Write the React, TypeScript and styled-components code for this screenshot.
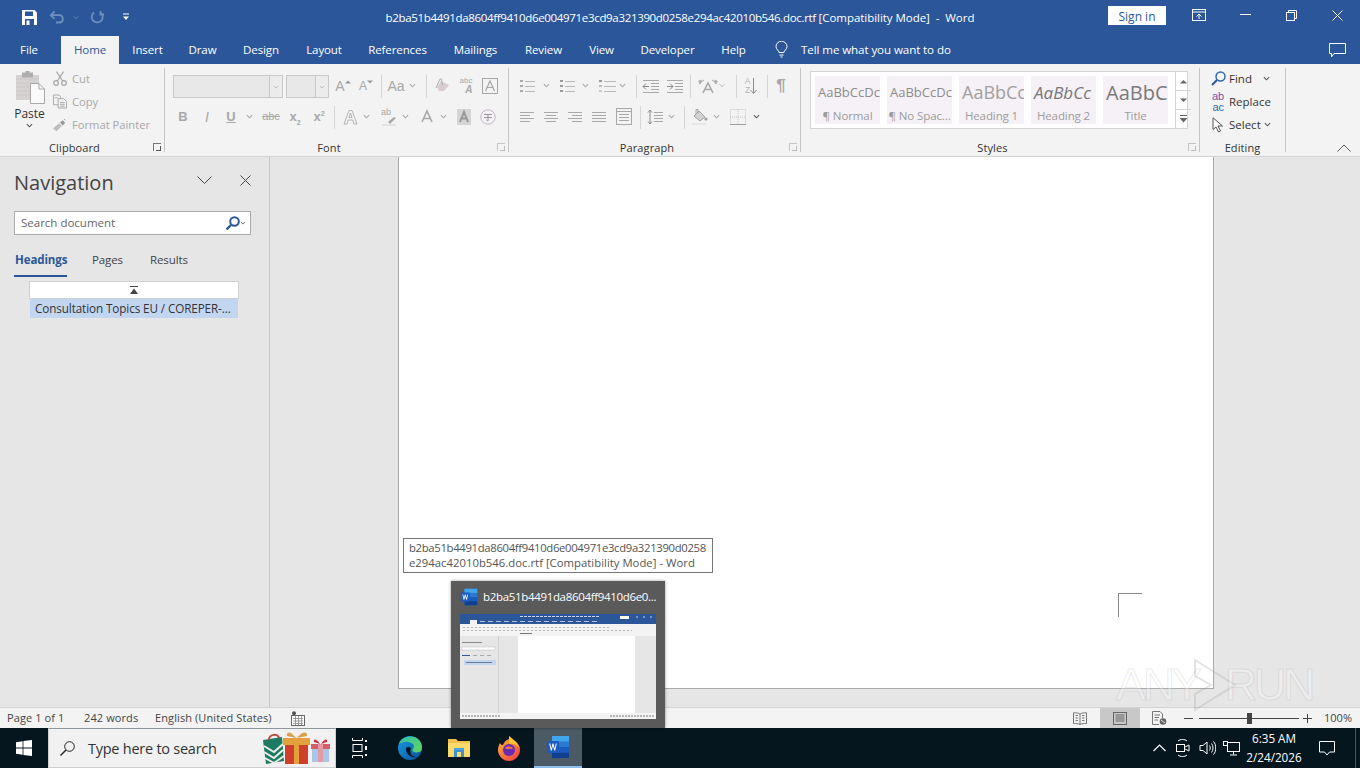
import React from 'react'
import styled, { createGlobalStyle } from 'styled-components'

const UI = '"Open Sans", "Noto Sans", "Liberation Sans", sans-serif'
const DIM = '#a8a8a8'

const Global = createGlobalStyle`
	html, body {
		margin: 0;
		padding: 0;
		overflow: hidden;
		background: #e6e6e6;
		font-family: ${UI};
	}
`

const Screen = styled.div`
	position: relative;
	width: 1360px;
	height: 768px;
	display: flex;
	flex-direction: column;
	overflow: hidden;
`

/* title bar */
const TitleBar = styled.div`
	height: 36px;
	flex: none;
	background: #2b579a;
	display: grid;
	grid-template-columns: 1fr auto 1fr;
	color: #fff;
`
const Qat = styled.div`
	display: flex;
	align-items: center;
	height: 34px;
	padding-left: 17px;
`
const QatBtn = styled.span<{ $w: number }>`
	width: ${p => p.$w}px;
	flex: none;
	display: flex;
	align-items: center;
	justify-content: center;
`
const DocTitle = styled.div`
	font-size: 11.5px;
	line-height: 35px;
	white-space: pre;
	letter-spacing: -0.33px;
`
const TitleTail = styled.span`
	letter-spacing: -0.04px;
`
const WinArea = styled.div`
	display: flex;
	justify-content: flex-end;
`
const SignIn = styled.span`
	width: 58px;
	height: 19px;
	margin: 6px 10px 0 0;
	background: #fff;
	color: #2b579a;
	font-size: 12px;
	line-height: 21px;
	text-align: center;
`
const WinBtn = styled.span`
	width: 46px;
	height: 30px;
	display: flex;
	align-items: center;
	justify-content: center;
`

/* tabs */
const TabBar = styled.div`
	height: 28px;
	flex: none;
	background: #2b579a;
	display: flex;
	align-items: stretch;
`
const Tab = styled.span<{ $w: number; $active?: boolean; $ml?: number }>`
	width: ${p => p.$w}px;
	margin-left: ${p => p.$ml || 0}px;
	flex: none;
	text-align: center;
	font-size: 11.5px;
	line-height: 28px;
	letter-spacing: -0.1px;
	color: ${p => (p.$active ? '#2b579a' : '#fff')};
	background: ${p => (p.$active ? '#f3f3f3' : 'transparent')};
`
const TellMe = styled.div`
	display: flex;
	align-items: center;
	margin-left: 16px;
	padding-bottom: 2px;
	color: #fff;
	font-size: 11.6px;
	letter-spacing: -0.1px;
	gap: 13px;
`
const CommentBtn = styled.span`
	margin-left: auto;
	margin-right: 14px;
	display: flex;
	align-items: center;
`

/* ribbon */
const Ribbon = styled.div`
	height: 93px;
	flex: none;
	background: #f3f3f3;
	border-bottom: 1px solid #d2d2d2;
	box-sizing: border-box;
	display: flex;
	position: relative;
`
const Group = styled.div<{ $w: number }>`
	width: ${p => p.$w}px;
	flex: none;
	box-sizing: border-box;
	display: flex;
	flex-direction: column;
	height: 84px;
	margin-top: 4px;
	border-right: 1px solid #c6c6c6;
`
const GroupBody = styled.div`
	flex: 1;
	min-height: 0;
`
const GroupFoot = styled.div<{ $plain?: boolean }>`
	height: 17px;
	margin-bottom: -4px;
	flex: none;
	display: flex;
	align-items: center;
	justify-content: center;
	padding-right: ${p => (p.$plain ? 0 : 15)}px;
	position: relative;
	font-size: 11px;
	color: #333;
	letter-spacing: 0.1px;
`
const Launcher = styled.span<{ $dark?: boolean }>`
	position: absolute;
	right: 3px;
	top: 4px;
	width: 7px;
	height: 7px;
	border: 1px solid ${p => (p.$dark ? '#777' : '#c4c4c4')};
	border-right-width: 0;
	border-bottom-width: 0;
	&::after {
		content: '';
		position: absolute;
		right: 0;
		bottom: 0;
		width: 4px;
		height: 4px;
		border-right: 1px solid ${p => (p.$dark ? '#555' : '#bbb')};
		border-bottom: 1px solid ${p => (p.$dark ? '#555' : '#bbb')};
	}
`
const ClipBody = styled(GroupBody)`
	display: flex;
	padding-left: 13px;
`
const PasteCol = styled.div`
	width: 33px;
	display: flex;
	flex-direction: column;
	align-items: center;
	padding-top: 3px;
`
const PasteLabel = styled.span`
	font-size: 12px;
	color: #333;
	line-height: 17px;
`
const ClipList = styled.div`
	margin: -1px 0 0 7px;
`
const ClipRow = styled.div`
	display: flex;
	align-items: center;
	height: 23px;
	gap: 5px;
	font-size: 11.2px;
	color: ${DIM};
	white-space: nowrap;
`
const ClipIcon = styled.span`
	width: 14px;
	display: flex;
	justify-content: center;
`
const Rows = styled.div`
	display: flex;
	flex-direction: column;
	padding-top: 7px;
`
const Row = styled.div<{ $ml?: number; $top?: number }>`
	display: flex;
	align-items: center;
	height: 23px;
	margin-left: ${p => p.$ml || 0}px;
	margin-top: ${p => p.$top || 0}px;
`
const Tool = styled.span<{ $w: number; $ml?: number }>`
	width: ${p => p.$w}px;
	margin-left: ${p => p.$ml || 0}px;
	margin-bottom: 2px;
	flex: none;
	display: flex;
	align-items: center;
	justify-content: center;
	color: ${DIM};
`
const Glyph = styled.span<{ $size?: number; $bold?: boolean; $italic?: boolean; $under?: boolean; $strike?: boolean; $c?: string }>`
	font-family: "Liberation Sans", sans-serif;
	font-size: ${p => p.$size || 13}px;
	font-weight: ${p => (p.$bold ? 700 : 400)};
	font-style: ${p => (p.$italic ? 'italic' : 'normal')};
	text-decoration: ${p => (p.$under ? 'underline' : p.$strike ? 'line-through' : 'none')};
	line-height: 1;
	white-space: nowrap;
	color: ${p => p.$c || DIM};
	sub, sup { font-size: 7px; line-height: 0; }
`
const Stack = styled.span<{ $align?: string }>`
	display: flex;
	flex-direction: column;
	align-items: ${p => p.$align || 'flex-end'};
	line-height: 1;
`
const GrowMark = styled.svg`
	flex: none;
	margin: -7px 0 0 0;
`
const Sep = styled.span<{ $ml?: number }>`
	width: 1px;
	height: 23px;
	flex: none;
	background: #d6d6d6;
	margin-left: ${p => p.$ml || 0}px;
`
const Combo = styled.div<{ $w: number; $ml?: number }>`
	width: ${p => p.$w}px;
	height: 23px;
	box-sizing: border-box;
	margin-left: ${p => p.$ml || 0}px;
	flex: none;
	background: #e8e8e8;
	border: 1px solid #c8c8c8;
	display: flex;
	justify-content: flex-end;
`
const ComboArrow = styled.span`
	width: 12px;
	border-left: 1px solid #c8c8c8;
	display: flex;
	align-items: center;
	justify-content: center;
	background: #ececec;
`

/* styles gallery */
const StylesBody = styled(GroupBody)`
	padding: 3px 0 0 9px;
`
const Gallery = styled.div`
	width: 378px;
	height: 58px;
	box-sizing: border-box;
	background: #fff;
	border: 1px solid #d4d4d4;
	display: flex;
	padding: 4px 0 4px 4px;
	gap: 7px;
`
const StyleTile = styled.div`
	width: 65px;
	height: 48px;
	flex: none;
	background: #f6f1f6;
	overflow: hidden;
	display: flex;
	flex-direction: column;
	align-items: center;
`
const Preview = styled.div<{ $size: number; $italic?: boolean; $tone?: string }>`
	height: 31px;
	width: 100%;
	line-height: 33px;
	padding-left: 3px;
	box-sizing: border-box;
	overflow: hidden;
	white-space: nowrap;
	font-size: ${p => p.$size}px;
	font-style: ${p => (p.$italic ? 'italic' : 'normal')};
	color: ${p => p.$tone || '#8c8c8c'};
`
const Caption = styled.div`
	font-size: 11.5px;
	line-height: 17px;
	color: #9c9c9c;
	white-space: nowrap;
	letter-spacing: -0.1px;
`
const Spinner = styled.div`
	margin-left: auto;
	width: 15px;
	margin-top: -4px;
	margin-bottom: -4px;
	flex: none;
	border-left: 1px solid #d4d4d4;
	display: flex;
	flex-direction: column;
`
const SpinCell = styled.span<{ $last?: boolean }>`
	flex: 1;
	display: flex;
	align-items: center;
	justify-content: center;
	border-bottom: ${p => (p.$last ? 'none' : '1px solid #d4d4d4')};
`

/* editing */
const EditBody = styled(GroupBody)`
	padding-left: 9px;
	margin-top: -1px;
`
const EditRow = styled.div`
	display: flex;
	align-items: center;
	height: 23px;
	font-size: 11.5px;
	color: #333;
	white-space: nowrap;
`
const EditIcon = styled.span`
	width: 20px;
	flex: none;
	display: flex;
	justify-content: center;
	padding-right: 2px;
	box-sizing: border-box;
`
const EditChev = styled.span<{ $ml: number }>`
	margin-left: ${p => p.$ml}px;
	display: flex;
`
const Collapse = styled.span`
	position: absolute;
	right: 9px;
	bottom: 4px;
	display: flex;
`

/* main */
const Main = styled.div`
	height: 550px;
	flex: none;
	display: flex;
	background: #e6e6e6;
`
const NavPane = styled.aside`
	width: 270px;
	flex: none;
	box-sizing: border-box;
	border-right: 1px solid #c6c6c6;
	padding: 0 0 0 14px;
`
const NavHead = styled.div`
	height: 50px;
	display: flex;
	align-items: center;
	font-size: 20px;
	color: #444;
	padding-right: 3px;
`
const NavTitle = styled.span`
	flex: 1;
`
const NavBtn = styled.span`
	width: 41px;
	display: flex;
	justify-content: center;
	margin-top: -4px;
`
const SearchBox = styled.div`
	width: 237px;
	height: 24px;
	margin-top: 4px;
	box-sizing: border-box;
	background: #fff;
	border: 1px solid #ababab;
	display: flex;
	align-items: center;
	padding: 0 4px 0 6px;
	font-size: 11.5px;
	color: #666;
`
const SearchText = styled.span`
	flex: 1;
	padding-bottom: 2px;
`
const NavTabs = styled.div`
	display: flex;
	height: 42px;
`
const NavTab = styled.span<{ $w: number; $active?: boolean }>`
	width: ${p => p.$w}px;
	flex: none;
	box-sizing: border-box;
	height: 42px;
	line-height: 50px;
	padding-left: ${p => (p.$active ? 1 : 0)}px;
	font-size: 11.5px;
	letter-spacing: -0.1px;
	font-weight: ${p => (p.$active ? 700 : 400)};
	color: ${p => (p.$active ? '#2b579a' : '#444')};
	border-bottom: ${p => (p.$active ? '2px solid #2b579a' : 'none')};
	margin-right: ${p => (p.$active ? 25 : 0)}px;
`
const HeadingTop = styled.div`
	width: 210px;
	height: 18px;
	margin: 4px 0 0 15px;
	box-sizing: border-box;
	background: #fff;
	border: 1px solid #d0d0d0;
	display: flex;
	align-items: center;
	justify-content: center;
`
const HeadingItem = styled.div`
	width: 208px;
	height: 19px;
	margin-left: 16px;
	background: #c3d6f1;
	font-size: 11.7px;
	line-height: 19px;
	letter-spacing: -0.1px;
	color: #333;
	padding-left: 5px;
	box-sizing: border-box;
	white-space: nowrap;
	overflow: hidden;
`
const DocArea = styled.div`
	flex: 1;
	padding-left: 128px;
`
const Page = styled.div`
	width: 816px;
	height: 532px;
	box-sizing: border-box;
	background: #fff;
	border: 1px solid #a9a9a9;
	border-top: none;
	display: flex;
	justify-content: flex-end;
	align-items: flex-end;
	padding: 0 71px 71px 0;
`
const CropMark = styled.span`
	width: 23px;
	height: 23px;
	border-top: 1px solid #8a8a8a;
	border-left: 1px solid #8a8a8a;
`

/* status bar */
const StatusBar = styled.div`
	height: 21px;
	flex: none;
	box-sizing: border-box;
	background: #f3f3f3;
	border-top: 1px solid #d2d2d2;
	display: flex;
	align-items: center;
	padding-left: 7px;
	font-size: 11px;
	color: #444;
`
const StatusText = styled.span<{ $w: number }>`
	width: ${p => p.$w}px;
	flex: none;
	padding-bottom: 2px;
	white-space: nowrap;
	letter-spacing: 0.1px;
`
const ViewBtn = styled.span<{ $w: number; $on?: boolean; $auto?: boolean }>`
	width: ${p => p.$w}px;
	height: 20px;
	margin-left: ${p => (p.$auto ? 'auto' : '0')};
	flex: none;
	display: flex;
	align-items: center;
	justify-content: center;
	background: ${p => (p.$on ? '#c8c8c8' : 'transparent')};
`
const Slider = styled.span`
	width: 100px;
	height: 1px;
	flex: none;
	background: #444;
	display: flex;
	justify-content: center;
	align-items: center;
`
const Thumb = styled.span`
	width: 5px;
	height: 11px;
	background: #444;
	flex: none;
`
const Zoom = styled.span`
	width: 37px;
	padding-right: 8px;
	padding-bottom: 2px;
	text-align: right;
	flex: none;
`

/* taskbar */
const Taskbar = styled.div`
	height: 40px;
	flex: none;
	background: #05161f;
	display: flex;
	align-items: stretch;
	color: #fff;
`
const TaskItem = styled.span<{ $w: number; $active?: boolean }>`
	width: ${p => p.$w}px;
	flex: none;
	box-sizing: border-box;
	display: flex;
	align-items: center;
	justify-content: center;
	background: ${p => (p.$active ? '#4b5a65' : 'transparent')};
	border-bottom: ${p => (p.$active ? '2px solid #8cc0ea' : 'none')};
`
const SearchBar = styled.div`
	width: 288px;
	flex: none;
	box-sizing: border-box;
	background: #f1f1f1;
	border: 1px solid #cfcfcf;
	border-top-color: #8f979c;
	display: flex;
	align-items: center;
	padding: 0 3px 0 11px;
	color: #333;
	font-size: 14.5px;
	letter-spacing: -0.25px;
`
const SearchPrompt = styled.span`
	margin-left: 13px;
	flex: 1;
	white-space: nowrap;
`
const Clock = styled.span`
	width: 62px;
	flex: none;
	font-size: 11.7px;
	line-height: 19px;
	display: flex;
	flex-direction: column;
	justify-content: center;
	white-space: nowrap;
	align-items: center;
`
const Tray = styled.div`
	margin-left: auto;
	display: flex;
	align-items: stretch;
`
const DesktopEdge = styled.span`
	width: 4px;
	margin-left: 6px;
	border-left: 1px solid #4a5560;
`

/* overlays */
const Tooltip = styled.div`
	position: absolute;
	left: 403px;
	top: 538px;
	width: 310px;
	height: 35px;
	box-sizing: border-box;
	background: #fff;
	border: 1px solid #767676;
	padding: 1px 0 0 5px;
	font-size: 11.3px;
	line-height: 15px;
	color: #555;
	white-space: nowrap;
`
const TipLine = styled.div<{ $ls: number }>`
	letter-spacing: ${p => p.$ls}px;
`
const Peek = styled.div`
	position: absolute;
	left: 451px;
	top: 581px;
	width: 214px;
	height: 147px;
	background: #5a5a5a;
	box-shadow: 0 0 3px rgba(0, 0, 0, 0.4);
	display: flex;
	flex-direction: column;
	padding: 0 9px;
	box-sizing: border-box;
	color: #fff;
`
const PeekHead = styled.div`
	height: 33px;
	flex: none;
	display: flex;
	align-items: center;
	gap: 5px;
	padding-bottom: 2px;
	box-sizing: border-box;
	font-size: 11.5px;
	white-space: nowrap;
	letter-spacing: -0.33px;
	svg { flex: none; }
`
const Watermark = styled.div`
	position: absolute;
	left: 1116px;
	top: 656px;
	width: 200px;
	height: 58px;
	display: flex;
	align-items: center;
	pointer-events: none;
	font-family: "Liberation Sans", sans-serif;
	font-size: 45px;
	color: rgba(255, 255, 255, 0.25);
	-webkit-text-stroke: 1px rgba(150, 150, 150, 0.2);
	letter-spacing: -3.3px;
`
const WatermarkPlay = styled.svg`
	margin: 0 -16px 0 -14px;
	flex: none;
`

/* icons */
const Chev = ({ c = DIM, s = 7 }: { c?: string; s?: number }) => (
	<svg width={s} height={s} viewBox="0 0 8 8" fill="none" stroke={c} strokeWidth="1.2"><path d="M1 2.5 4 5.5 7 2.5" /></svg>
)
const AlignIcon = ({ kind }: { kind: 'l' | 'c' | 'r' | 'j' }) => {
	const p = (i: number) => {
		const short = i % 2 === 1 ? 4 : 0
		if (kind === 'l') return `M1 ${3.5 + i * 3}H${15 - short}`
		if (kind === 'r') return `M${1 + short} ${3.5 + i * 3}H15`
		if (kind === 'c') return `M${1 + short / 2} ${3.5 + i * 3}H${15 - short / 2}`
		return `M1 ${3.5 + i * 3}H15`
	}
	return (
		<svg width="16" height="16" viewBox="0 0 16 16" stroke={DIM} fill="none">
			{[0, 1, 2, 3].map(i => <path key={i} d={p(i)} />)}
		</svg>
	)
}
const ListIcon = ({ marks, w = 16 }: { marks: string[]; w?: number }) => (
	<svg width={w} height="16" viewBox={`0 0 ${w} 16`} fill="none">
		{marks.map((m, i) => (
			<g key={i}>
				<rect x="1" y={2 + i * 5} width="3" height="2" fill={m} />
				<path d={`M6 ${3.5 + i * 5}H${w}`} stroke="#b8b8b8" />
			</g>
		))}
	</svg>
)
const Indent = ({ out }: { out?: boolean }) => (
	<svg width="18" height="16" viewBox="0 0 18 16" fill="none" stroke={DIM}>
		<path d="M1 2.5H17M9 5.5H17M9 8.5H17M9 11.5H17M1 14.5H17" />
		<path d={out ? 'M7 8.5H1M4 5.5 1 8.5 4 11.5' : 'M1 8.5H7M4 5.5 7 8.5 4 11.5'} stroke="#8a8a8a" />
	</svg>
)

const SaveIcon = () => (
	<svg width="15" height="15" viewBox="0 0 15 15"><path d="M0 0H12.5L15 2.5V15H0Z" fill="#fff" /><rect x="3" y="1.5" width="8" height="4.5" fill="#2b579a" /><rect x="3" y="9" width="9" height="6" fill="#2b579a" /><rect x="4.5" y="10.5" width="3" height="4.5" fill="#fff" /></svg>
)
const UndoIcon = () => (
	<svg width="16" height="14" viewBox="0 0 16 14" fill="none" stroke="#6f8fbf" strokeWidth="1.8"><path d="M5.5 1.5 1.8 5.2 5.5 8.9M2 5.2H10.5C15 5.2 15 12.5 10 12.5H7" /></svg>
)
const RedoIcon = () => (
	<svg width="14" height="14" viewBox="0 0 14 14" fill="none" stroke="#6f8fbf" strokeWidth="1.8"><path d="M4 2.5A5.5 5.5 0 1 0 10.5 2.5M10.5 1V4.5H14" /></svg>
)
const CustomizeIcon = () => (
	<svg width="8" height="8" viewBox="0 0 8 8" fill="#fff"><rect x="1" y="0.5" width="6" height="1" /><path d="M1 3.5H7L4 7Z" /></svg>
)
const RibbonOptIcon = () => (
	<svg width="14" height="12" viewBox="0 0 14 12" fill="none" stroke="#fff"><rect x="0.5" y="0.5" width="13" height="11" /><path d="M0.5 3H13.5M7 10V5M4.5 7.5 7 5 9.5 7.5" /></svg>
)
const MinIcon = () => <svg width="11" height="2" viewBox="0 0 11 2"><path d="M0 .5H11" stroke="#fff" /></svg>
const RestoreIcon = () => (
	<svg width="11" height="11" viewBox="0 0 11 11" fill="none" stroke="#fff"><rect x="0.5" y="2.5" width="8" height="8" /><path d="M2.5 2.5V.5H10.5V8.5H8.5" /></svg>
)
const CloseIcon = ({ c = '#fff', s = 11 }: { c?: string; s?: number }) => (
	<svg width={s} height={s} viewBox="0 0 11 11" stroke={c}><path d="M.5 .5 10.5 10.5M10.5 .5 .5 10.5" /></svg>
)
const BulbIcon = () => (
	<svg width="13" height="17" viewBox="0 0 13 17" fill="none" stroke="#fff"><path d="M4 11.5C4 9.5 1 8.5 1 5.7A5.5 5.5 0 0 1 12 5.7C12 8.5 9 9.5 9 11.5ZM4.5 14H8.5M5.5 16H7.5" /></svg>
)
const CommentIcon = () => (
	<svg width="17" height="15" viewBox="0 0 17 15" fill="none" stroke="#fff"><path d="M.5 .5H16.5V10.5H5L2.5 14V10.5H.5Z" /></svg>
)
const PasteIcon = () => (
	<svg width="30" height="34" viewBox="0 0 30 34">
		<rect x="1" y="4" width="23" height="25" fill="#d6d2d2" />
		<path d="M1 8H24M1 12H24M1 16H24M1 20H24M1 24H24" stroke="#cdc8c8" />
		<rect x="7" y="1.5" width="11" height="5" fill="#aeaeae" />
		<rect x="10.5" y="0" width="4" height="3" fill="#aeaeae" />
		<path d="M15.5 12.5H24L29.5 18V32.5H15.5Z" fill="#fafafa" stroke="#a8a8a8" />
		<path d="M24 12.5V18H29.5" fill="none" stroke="#a8a8a8" />
	</svg>
)
const CutIcon = () => (
	<svg width="14" height="15" viewBox="0 0 14 15" fill="none" stroke="#a6a6a6" strokeWidth="1.2"><circle cx="3" cy="12" r="2.3" /><circle cx="11" cy="12" r="2.3" /><path d="M4.3 10 10.5.7M9.7 10 3.5.7" /></svg>
)
const CopyIcon = () => (
	<svg width="15" height="15" viewBox="0 0 15 15" fill="#f3f3f3" stroke="#a6a6a6"><path d="M.5 .5H6.5L8 2V11H.5Z" /><path d="M5.5 4.5H11.5L14.5 7.5V14.5H5.5Z" /><path d="M7.5 8.5H12.5M7.5 10.5H12.5M7.5 12.5H12.5M2 3.5H5" /></svg>
)
const PainterIcon = () => (
	<svg width="16" height="14" viewBox="0 0 16 14"><path d="M0 11 7 5 10 8 4 14Z" fill="#bdbdbd" /><path d="M8 4 11 1.5 14 4.5 11 7.5Z" fill="#9a9a9a" /><path d="M12.5 0 14 1.5" stroke="#9a9a9a" /></svg>
)
const GrowIcon = ({ down }: { down?: boolean }) => (
	<>
		<Glyph $size={down ? 12 : 14}>A</Glyph>
		<GrowMark width="6" height="4" viewBox="0 0 6 4"><path d={down ? 'M0 .5H6L3 3.5Z' : 'M0 3.5H6L3 .5Z'} fill="#999" /></GrowMark>
	</>
)
const EraserIcon = () => (
	<svg width="16" height="15" viewBox="0 0 16 15"><path d="M7 3 15 7 10 13H5L3 9Z" fill="#d9ccd0" /><path d="M2 10 6 1H7.500L8.500 7" fill="none" stroke="#b0b0b0" /></svg>
)
const BoxAIcon = () => (
	<svg width="16" height="16" viewBox="0 0 16 16" fill="none" stroke="#a6a6a6"><rect x=".5" y=".5" width="15" height="15" /><path d="M3.500 13 8 3 12.500 13M5.200 9.500H10.800" strokeWidth="1.2" /></svg>
)
const OutlineAIcon = () => (
	<svg width="15" height="16" viewBox="0 0 15 16" fill="none" stroke="#b5b5b5"><path d="M1 15 6 1.5H9L14 15H11L9.8 11H5.2L4 15Z" /><path d="M6 8.5H9L7.5 4Z" /></svg>
)
const HighlightIcon = () => (
	<Stack $align="flex-start">
		<Glyph $size={9}>ab</Glyph>
		<svg width="16" height="9" viewBox="0 0 16 9"><path d="M7 5 13 0 15 1 9 7Z" fill="#a8a8a8" /><rect x="1" y="7" width="14" height="2" fill="#e3e3e3" /></svg>
	</Stack>
)
const ColorAIcon = () => (
	<svg width="14" height="16" viewBox="0 0 14 16" fill="none" stroke={DIM} strokeWidth="1.6"><path d="M2 13 7 2 12 13M3.800 9.500H10.200" /></svg>
)
const ShadeAIcon = () => (
	<svg width="14" height="16" viewBox="0 0 14 16"><rect width="14" height="16" fill="#d4d4d4" /><path d="M3 13 7 3 11 13M4.500 9.500H9.500" fill="none" stroke="#999" strokeWidth="2" /></svg>
)
const EncloseIcon = () => (
	<svg width="16" height="16" viewBox="0 0 16 16" fill="none"><circle cx="8" cy="8" r="7.2" stroke="#c3b4c6" /><path d="M4 5.5H12M8 5.5V12L6.5 11M4 8.5H12" stroke="#a08fa5" /></svg>
)
const SpeechIcon = () => (
	<svg width="22" height="16" viewBox="0 0 22 16" fill="none" stroke={DIM}><path d="M6 15 11 5 16 15M8 11.500H14" strokeWidth="1.6" /><path d="M2 6 7 2M20 6 15 2" /><path d="M1 3 5 1.500 3.500 6ZM21 3 17 1.500 18.500 6Z" fill={DIM} stroke="none" /></svg>
)
const SortIcon = () => (
	<>
		<Stack $align="center">
			<Glyph $size={8.5} $c="#b5b5b5">A</Glyph>
			<Glyph $size={8.5} $c="#b5b5b5">Z</Glyph>
		</Stack>
		<svg width="7" height="16" viewBox="0 0 7 16" fill="none" stroke="#8c8c8c"><path d="M3.500 0V15M.5 12 3.500 15.500 6.500 12" /></svg>
	</>
)
const DistributeIcon = () => (
	<svg width="16" height="17" viewBox="0 0 16 17" fill="none" stroke={DIM}><rect x=".5" y=".5" width="15" height="16" /><path d="M0 3.5H16M3 6.5H13M3 9.5H13M3 12.5H13" /></svg>
)
const SpacingIcon = () => (
	<svg width="16" height="16" viewBox="0 0 16 16" fill="none" stroke={DIM}><path d="M7 3.5H16M7 6.5H16M7 9.5H16M7 12.5H16" /><path d="M3 1V15M1 3.5 3 1 5 3.5M1 12.5 3 15 5 12.5" stroke="#8d8d8d" /></svg>
)
const ShadingIcon = () => (
	<svg width="17" height="17" viewBox="0 0 17 17"><path d="M3 8 8 3 14 9 9 13Z" fill="#d2d2d2" stroke="#a0a0a0" /><path d="M5 6V1.5H7V5" fill="none" stroke="#a0a0a0" /><circle cx="15" cy="11" r="1.6" fill="#a0a0a0" /><rect x="1" y="15" width="14" height="2" fill="#e6e6e6" /></svg>
)
const BordersIcon = () => (
	<svg width="16" height="16" viewBox="0 0 16 16" fill="none" stroke="#c4c4c4" strokeDasharray="1 1"><rect x=".5" y=".5" width="15" height="15" /><path d="M8 0V16M0 8H16" /><path d="M0 15.5H16" stroke="#a0a0a0" strokeDasharray="none" /></svg>
)
const FindIcon = () => (
	<svg width="15" height="15" viewBox="0 0 15 15" fill="none"><circle cx="9.5" cy="5.5" r="4.5" stroke="#2b6cb0" strokeWidth="1.5" /><path d="M6 9 1 14" stroke="#2b579a" strokeWidth="2" /></svg>
)
const ReplaceIcon = () => (
	<Stack>
		<Glyph $size={11} $c="#7a4fa3">ab</Glyph>
		<Glyph $size={11} $c="#2b6cb0">ac</Glyph>
	</Stack>
)
const SelectIcon = () => (
	<svg width="12" height="16" viewBox="0 0 12 16" fill="#fff" stroke="#555"><path d="M1 .8V12.5L4 10 6.5 15 8.5 14 6 9H10.5Z" /></svg>
)
const MagnifierIcon = ({ c = '#2b579a' }: { c?: string }) => (
	<svg width="15" height="15" viewBox="0 0 15 15" fill="none"><circle cx="9.5" cy="5.5" r="4.3" stroke={c} strokeWidth="2" /><path d="M6 9 1.5 13.5" stroke={c} strokeWidth="2.4" /></svg>
)
const CollapseTopIcon = () => (
	<svg width="10" height="9" viewBox="0 0 10 9"><path d="M1 .5H9" stroke="#444" /><path d="M1 8 5 2.5 9 8Z" fill="#444" /></svg>
)
const ProofIcon = () => (
	<svg width="14" height="15" viewBox="0 0 14 15"><rect x=".5" y="4.5" width="13" height="10" fill="#fff" stroke="#666" /><path d="M2 7.5H12M2 10H12M2 12.5H12M4.5 5V14M7.5 5V14M10.5 5V14" stroke="#888" strokeWidth=".8" /><circle cx="3" cy="2.2" r="2" fill="#555" /></svg>
)
const ReadIcon = () => (
	<svg width="14" height="13" viewBox="0 0 14 13" fill="none" stroke="#777"><path d="M7 2C5 .8 3 .8 .5 .8V11.5C3 11.5 5 11.5 7 12.5 9 11.5 11 11.5 13.5 11.5V.8C11 .8 9 .8 7 2ZM7 2V12.5M2.5 3.5H5M2.5 6H5M2.5 8.5H5M9 3.5H11.5M9 6H11.5M9 8.5H11.5" /></svg>
)
const PrintIcon = () => (
	<svg width="14" height="13" viewBox="0 0 14 13" fill="none" stroke="#666"><rect x=".5" y=".5" width="13" height="12" /><path d="M2.5 3H11.5M2.5 5H11.5M2.5 7H11.5M2.5 9H11.5" /></svg>
)
const WebIcon = () => (
	<svg width="15" height="14" viewBox="0 0 15 14"><path d="M.5 .5H8L10.5 3V7M.5 .5V13.5H7" fill="none" stroke="#777" /><path d="M2.5 4H8M2.5 6.5H7M2.5 9H6" stroke="#777" /><circle cx="11" cy="10.5" r="3.3" fill="#666" /><path d="M9 9 13 12" stroke="#ddd" /></svg>
)
const WinLogo = () => (
	<svg width="16" height="16" viewBox="0 0 16 16" fill="#fff"><path d="M0 2.2 6.6 1.2V7.6H0ZM7.4 1.1 16 0V7.6H7.4ZM0 8.4H6.6V14.8L0 13.8ZM7.4 8.4H16V16L7.4 14.9Z" /></svg>
)
const TaskSearchIcon = () => (
	<svg width="15" height="15" viewBox="0 0 15 15" fill="none" stroke="#222"><circle cx="9.5" cy="5.5" r="4.8" /><path d="M6 9 .5 14.5" strokeWidth="1.4" /></svg>
)
const GiftsIcon = () => (
	<svg width="70" height="36" viewBox="0 0 70 36">
		<path d="M1 10 20 7 22 31 4 34Z" fill="#1f7a64" />
		<path d="M2 16 12 22 21 14M2 22 12 28 21 20M3 28 12 33 22 26" fill="none" stroke="#e8f0e8" strokeWidth="2" />
		<path d="M7 10C7 4 16 3 17 8" fill="none" stroke="#b5493a" strokeWidth="2" />
		<rect x="23" y="11" width="23" height="23" fill="#cf3f2c" />
		<rect x="21" y="8" width="27" height="7" fill="#e2a13a" />
		<rect x="32" y="8" width="5" height="26" fill="#e2a13a" />
		<path d="M34 8C28 0 24 2 25 6ZM35 8C41 0 46 2 45 6Z" fill="#d9a24a" />
		<rect x="50" y="16" width="17" height="16" fill="#a9c6e8" />
		<rect x="49" y="14" width="19" height="5" fill="#d5606c" />
		<rect x="56" y="14" width="5" height="18" fill="#e29aa3" />
		<path d="M58 14C54 8 51 9 52 12ZM59 14C63 8 66 9 65 12Z" fill="#c8384a" />
	</svg>
)
const TaskViewIcon = () => (
	<svg width="16" height="20" viewBox="0 0 16 20" fill="none" stroke="#fff"><path d="M.5 0V2.5H10.5M.5 17.5H10.5M.5 20V17.5M10.5 0V2.5M10.5 20V17.5" /><rect x="1" y="6.5" width="9" height="7" /><path d="M14 2V4M14 8V12M14 16V18" strokeWidth="2" /></svg>
)
const EdgeIcon = () => (
	<svg width="24" height="24" viewBox="0 0 24 24">
		<defs>
			<linearGradient id="edgeA" x1="0" y1="0" x2="1" y2="1"><stop offset="0" stopColor="#35c1a8" /><stop offset="1" stopColor="#60d660" /></linearGradient>
			<linearGradient id="edgeB" x1="0" y1="0" x2="1" y2="1"><stop offset="0" stopColor="#1b9de2" /><stop offset="1" stopColor="#0a4f9c" /></linearGradient>
		</defs>
		<circle cx="12" cy="12" r="12" fill="url(#edgeB)" />
		<path d="M1 8C3 1 14-2 20 3 24 6 25 12 23 15 21 17 15 17 14.500 14.500 14 13 16 12 16 10 15 6 6 4 1 8Z" fill="url(#edgeA)" />
		<path d="M8 13C8 19 15 23 20 20.500 14 22 11 17 13 12 10 10 8 11 8 13Z" fill="#05161f" />
	</svg>
)
const FolderIcon = () => (
	<svg width="22" height="20" viewBox="0 0 22 20"><path d="M0 1H8L10 3H22V19H0Z" fill="#f1c24c" /><rect y="5" width="22" height="14" fill="#fbd96b" /><path d="M6 19V11H16V19H13V14H9V19Z" fill="#3f8fd2" /><rect x="6" y="10" width="10" height="2" fill="#4aa3e8" /></svg>
)
const FirefoxIcon = () => (
	<svg width="24" height="25" viewBox="0 0 24 25">
		<defs><linearGradient id="ffA" x1="0" y1="0" x2="1" y2="1"><stop offset="0" stopColor="#ffb52e" /><stop offset="1" stopColor="#f0364e" /></linearGradient></defs>
		<path d="M12 3C18 3 23 8 23 14S18 25 12 25 1 20 1 14C1 11 2 9 3 7 4 9 5 9 6 9 7 6 9 4 12 3Z" fill="url(#ffA)" />
		<path d="M12 0C15 2 20 6 23 13 20 8 16 7 12 8Z" fill="#ffc72e" />
		<circle cx="12" cy="14" r="6" fill="#6a2bb0" />
		<path d="M8 12C10 10 15 10 16 13 13 12 11 14 8 12Z" fill="#ff7a3a" />
	</svg>
)
const WordIcon = ({ s = 24 }: { s?: number }) => (
	<svg width={s} height={s} viewBox="0 0 24 24">
		<rect x="6" y="1" width="17" height="22" rx="1" fill="#2a7ad2" />
		<rect x="6" y="1" width="17" height="5.500" fill="#41a5ee" />
		<rect x="6" y="12" width="17" height="5.500" fill="#185abd" />
		<rect x="6" y="17.500" width="17" height="5.500" fill="#103f91" />
		<rect x="1" y="6" width="12" height="12" rx="1" fill="#1a5bbd" />
		<path d="M3.200 8.500 4.800 15.500H5.800L7 10.800 8.200 15.500H9.200L10.800 8.500H9.700L8.700 13.400 7.500 8.500H6.500L5.300 13.400 4.300 8.500Z" fill="#fff" />
	</svg>
)
const MeetIcon = () => (
	<svg width="16" height="20" viewBox="0 0 16 20" fill="none" stroke="#fff"><path d="M3 3C5 1 10 1 12 3M3 17C5 19 10 19 12 17" /><rect x="1.500" y="6.500" width="8" height="7" /><path d="M10 9 14 7V13L10 11" /></svg>
)
const SpeakerIcon = () => (
	<svg width="17" height="16" viewBox="0 0 17 16" fill="none" stroke="#fff"><path d="M1 5.500H4L8 2V14L4 10.500H1Z" /><path d="M10.500 5.500C11.500 7 11.500 9 10.500 10.500M12.500 3.500C14.500 6 14.500 10 12.500 12.500M14.500 1.500C17.500 5 17.500 11 14.500 14.500" /></svg>
)
const NetworkIcon = () => (
	<svg width="17" height="15" viewBox="0 0 17 15" fill="none" stroke="#fff"><rect x="4.500" y="1.500" width="12" height="9" /><path d="M10.500 10.500V13.500M7 14H14" /><rect x=".5" y=".5" width="4" height="4" fill="#05161f" /></svg>
)
const TrayCaret = () => <svg width="13" height="8" viewBox="0 0 13 8" fill="none" stroke="#fff" strokeWidth="1.2"><path d="M.5 7 6.500 1 12.500 7" /></svg>
const NotifyIcon = () => (
	<svg width="16" height="15" viewBox="0 0 16 15" fill="none" stroke="#fff"><path d="M.5 .5H15.500V11H10.500L8 14 5.500 11H.5Z" /></svg>
)
const PlayMark = () => (
	<WatermarkPlay width="56" height="58" viewBox="0 0 56 58" fill="none" stroke="rgba(150,150,150,.26)" strokeWidth="2"><path d="M10 4 50 29 10 54V38L26 29 10 20Z" /></WatermarkPlay>
)
// miniature of the same window, shown in the taskbar peek
const PeekShot = () => (
	<svg width="196" height="105" viewBox="0 0 196 105">
		<rect width="196" height="105" fill="#e6e6e6" />
		<rect width="196" height="10" fill="#2b579a" />
		<path d="M60 2.500H140" stroke="#c8d4e8" strokeDasharray="3 1" />
		<rect x="160" y="2" width="9" height="3" fill="#fff" />
		<path d="M176 3H194" stroke="#c8d4e8" strokeDasharray="2 5" />
		<path d="M20 7.500H140" stroke="#aebfdc" strokeDasharray="5 3" />
		<rect x="10" y="6" width="7" height="4" fill="#f3f3f3" />
		<rect y="10" width="196" height="12" fill="#f3f3f3" />
		<path d="M3 13.500H150M3 16.500H172" stroke="#b8b8b8" strokeDasharray="2 2" />
		<rect x="60" y="19" width="12" height="1" fill="#777" />
		<rect x="58" y="22" width="117" height="77" fill="#fff" />
		<path d="M38.500 22V99" stroke="#d0d0d0" />
		<rect x="2" y="28" width="20" height="1" fill="#888" />
		<rect x="2" y="33" width="33" height="3" fill="#fff" stroke="#bbb" strokeWidth=".5" />
		<rect x="2" y="41" width="8" height="1" fill="#2b579a" />
		<path d="M13 41.500H33" stroke="#aaa" strokeDasharray="4 3" />
		<rect x="4" y="46" width="32" height="5" fill="#c3d6f1" />
		<rect x="6" y="48" width="26" height="1" fill="#6a7a90" />
		<rect y="99" width="196" height="6" fill="#f3f3f3" />
		<path d="M2 102H40M150 102H194" stroke="#777" strokeDasharray="2 1" />
	</svg>
)

export default function App() {
	return (
		<Screen>
			<Global />
			<TitleBar>
				<Qat>
					<QatBtn $w={24}><SaveIcon /></QatBtn>
					<QatBtn $w={32}><UndoIcon /></QatBtn>
					<QatBtn $w={6}><Chev c="#6f8fbf" /></QatBtn>
					<QatBtn $w={35}><RedoIcon /></QatBtn>
					<QatBtn $w={24}><CustomizeIcon /></QatBtn>
				</Qat>
				<DocTitle>b2ba51b4491da8604ff9410d6e004971e3cd9a321390d0258e294ac42010b546.doc.rtf <TitleTail>{'[Compatibility Mode]  -  Word'}</TitleTail></DocTitle>
				<WinArea>
					<SignIn>Sign in</SignIn>
					<WinBtn><RibbonOptIcon /></WinBtn>
					<WinBtn><MinIcon /></WinBtn>
					<WinBtn><RestoreIcon /></WinBtn>
					<WinBtn><CloseIcon /></WinBtn>
				</WinArea>
			</TitleBar>

			<TabBar>
				<Tab $w={58}>File</Tab>
				<Tab $w={58} $ml={3} $active>Home</Tab>
				<Tab $w={57}>Insert</Tab>
				<Tab $w={53}>Draw</Tab>
				<Tab $w={64}>Design</Tab>
				<Tab $w={62}>Layout</Tab>
				<Tab $w={85}>References</Tab>
				<Tab $w={71}>Mailings</Tab>
				<Tab $w={65}>Review</Tab>
				<Tab $w={51}>View</Tab>
				<Tab $w={81}>Developer</Tab>
				<Tab $w={51}>Help</Tab>
				<TellMe><BulbIcon />Tell me what you want to do</TellMe>
				<CommentBtn><CommentIcon /></CommentBtn>
			</TabBar>

			<Ribbon>
				<Group $w={165}>
					<ClipBody>
						<PasteCol>
							<PasteIcon />
							<PasteLabel>Paste</PasteLabel>
							<Chev c="#555" />
						</PasteCol>
						<ClipList>
							<ClipRow><ClipIcon><CutIcon /></ClipIcon>Cut</ClipRow>
							<ClipRow><ClipIcon><CopyIcon /></ClipIcon>Copy</ClipRow>
							<ClipRow><ClipIcon><PainterIcon /></ClipIcon>Format Painter</ClipRow>
						</ClipList>
					</ClipBody>
					<GroupFoot>Clipboard<Launcher $dark /></GroupFoot>
				</Group>

				<Group $w={344}>
					<GroupBody>
						<Rows>
							<Row $ml={8}>
								<Combo $w={110}><ComboArrow><Chev c="#bbb" s={6} /></ComboArrow></Combo>
								<Combo $w={43} $ml={3}><ComboArrow><Chev c="#bbb" s={6} /></ComboArrow></Combo>
								<Tool $w={20} $ml={4}><GrowIcon /></Tool>
								<Tool $w={26}><GrowIcon down /></Tool>
								<Sep $ml={2} />
								<Tool $w={24} $ml={2}><Glyph $size={14}>Aa</Glyph></Tool>
								<Tool $w={8}><Chev /></Tool>
								<Sep $ml={10} />
								<Tool $w={24} $ml={3}><EraserIcon /></Tool>
								<Tool $w={24}>
									<Stack>
										<Glyph $size={8}>abc</Glyph>
										<Glyph $size={10} $italic $bold>A</Glyph>
									</Stack>
								</Tool>
								<Tool $w={24}><BoxAIcon /></Tool>
							</Row>
							<Row $ml={6} $top={8}>
								<Tool $w={24}><Glyph $bold>B</Glyph></Tool>
								<Tool $w={24}><Glyph $italic $size={14}>I</Glyph></Tool>
								<Tool $w={24}><Glyph $bold $under>U</Glyph></Tool>
								<Tool $w={13}><Chev /></Tool>
								<Tool $w={24} $ml={3}><Glyph $strike $size={11}>abc</Glyph></Tool>
								<Tool $w={24}><Glyph $bold>x<sub>2</sub></Glyph></Tool>
								<Tool $w={24}><Glyph $bold>x<sup>2</sup></Glyph></Tool>
								<Sep $ml={3} />
								<Tool $w={24} $ml={3}><OutlineAIcon /></Tool>
								<Tool $w={8}><Chev /></Tool>
								<Tool $w={24} $ml={7}><HighlightIcon /></Tool>
								<Tool $w={8}><Chev /></Tool>
								<Tool $w={24} $ml={6}><ColorAIcon /></Tool>
								<Tool $w={8}><Chev /></Tool>
								<Tool $w={24} $ml={5}><ShadeAIcon /></Tool>
								<Tool $w={24}><EncloseIcon /></Tool>
							</Row>
						</Rows>
					</GroupBody>
					<GroupFoot>Font<Launcher /></GroupFoot>
				</Group>

				<Group $w={292}>
					<GroupBody>
						<Rows>
							<Row $ml={6}>
								<Tool $w={24}><ListIcon marks={['#a8a8a8', '#a8a8a8', '#a8a8a8']} /></Tool>
								<Tool $w={14}><Chev /></Tool>
								<Tool $w={28}><ListIcon marks={['#999', '#999', '#999']} /></Tool>
								<Tool $w={8}><Chev /></Tool>
								<Tool $w={22} $ml={7}><ListIcon marks={['#999', '#bbb', '#ccc']} w={18} /></Tool>
								<Tool $w={8}><Chev /></Tool>
								<Sep $ml={10} />
								<Tool $w={24} $ml={2}><Indent out /></Tool>
								<Tool $w={24}><Indent /></Tool>
								<Sep $ml={3} />
								<Tool $w={22} $ml={6}><SpeechIcon /></Tool>
								<Tool $w={6}><Chev /></Tool>
								<Sep $ml={11} />
								<Tool $w={24} $ml={2}><SortIcon /></Tool>
								<Sep $ml={4} />
								<Tool $w={24} $ml={1}><Glyph $size={17} $bold>¶</Glyph></Tool>
							</Row>
							<Row $ml={6} $top={8}>
								<Tool $w={24}><AlignIcon kind="l" /></Tool>
								<Tool $w={24}><AlignIcon kind="c" /></Tool>
								<Tool $w={24}><AlignIcon kind="r" /></Tool>
								<Tool $w={24}><AlignIcon kind="j" /></Tool>
								<Tool $w={26}><DistributeIcon /></Tool>
								<Sep $ml={3} />
								<Tool $w={24} $ml={2}><SpacingIcon /></Tool>
								<Tool $w={8}><Chev /></Tool>
								<Sep $ml={9} />
								<Tool $w={24} $ml={2}><ShadingIcon /></Tool>
								<Tool $w={10}><Chev /></Tool>
								<Tool $w={24} $ml={5}><BordersIcon /></Tool>
								<Tool $w={12}><Chev c="#555" /></Tool>
							</Row>
						</Rows>
					</GroupBody>
					<GroupFoot>Paragraph<Launcher /></GroupFoot>
				</Group>

				<Group $w={399}>
					<StylesBody>
						<Gallery>
							<StyleTile><Preview $size={13}>AaBbCcDc</Preview><Caption>¶ Normal</Caption></StyleTile>
							<StyleTile><Preview $size={13}>AaBbCcDc</Preview><Caption>¶ No Spac...</Caption></StyleTile>
							<StyleTile><Preview $size={18} $tone="#a0a0a0">AaBbCc</Preview><Caption>Heading 1</Caption></StyleTile>
							<StyleTile><Preview $size={17} $italic $tone="#777">AaBbCc</Preview><Caption>Heading 2</Caption></StyleTile>
							<StyleTile><Preview $size={20} $tone="#7a7a7a">AaBbC</Preview><Caption>Title</Caption></StyleTile>
							<Spinner>
								<SpinCell><svg width="7" height="5" viewBox="0 0 7 5"><path d="M0 4.500 3.500 1 7 4.500Z" fill="#666" /></svg></SpinCell>
								<SpinCell><svg width="7" height="5" viewBox="0 0 7 5"><path d="M0 .5 3.500 4 7 .5Z" fill="#666" /></svg></SpinCell>
								<SpinCell $last><svg width="9" height="8" viewBox="0 0 9 8"><path d="M1 .5H8" stroke="#666" /><path d="M.5 3H8.500L4.500 7.500Z" fill="#666" /></svg></SpinCell>
							</Spinner>
						</Gallery>
					</StylesBody>
					<GroupFoot>Styles<Launcher /></GroupFoot>
				</Group>

				<Group $w={86}>
					<EditBody>
						<EditRow><EditIcon><FindIcon /></EditIcon>Find<EditChev $ml={11}><Chev c="#555" /></EditChev></EditRow>
						<EditRow><EditIcon><ReplaceIcon /></EditIcon>Replace</EditRow>
						<EditRow><EditIcon><SelectIcon /></EditIcon>Select<EditChev $ml={3}><Chev c="#555" /></EditChev></EditRow>
					</EditBody>
					<GroupFoot $plain>Editing</GroupFoot>
				</Group>

				<Collapse>
					<svg width="14" height="8" viewBox="0 0 14 8" fill="none" stroke="#555"><path d="M.5 7.500 7 1 13.500 7.500" /></svg>
				</Collapse>
			</Ribbon>

			<Main>
				<NavPane>
					<NavHead>
						<NavTitle>Navigation</NavTitle>
						<NavBtn><svg width="15" height="8" viewBox="0 0 15 8" fill="none" stroke="#444"><path d="M.5 .5 7.500 7.500 14.500 .5" /></svg></NavBtn>
						<NavBtn><CloseIcon c="#444" /></NavBtn>
					</NavHead>
					<SearchBox>
						<SearchText>Search document</SearchText>
						<MagnifierIcon />
						<Chev c="#666" s={6} />
					</SearchBox>
					<NavTabs>
						<NavTab $w={53} $active>Headings</NavTab>
						<NavTab $w={58}>Pages</NavTab>
						<NavTab $w={50}>Results</NavTab>
					</NavTabs>
					<HeadingTop><CollapseTopIcon /></HeadingTop>
					<HeadingItem>Consultation Topics EU / COREPER-...</HeadingItem>
				</NavPane>
				<DocArea>
					<Page><CropMark /></Page>
				</DocArea>
			</Main>

			<StatusBar>
				<StatusText $w={77}>Page 1 of 1</StatusText>
				<StatusText $w={71}>242 words</StatusText>
				<StatusText $w={136}>English (United States)</StatusText>
				<ProofIcon />
				<ViewBtn $w={41} $auto><ReadIcon /></ViewBtn>
				<ViewBtn $w={40} $on><PrintIcon /></ViewBtn>
				<ViewBtn $w={38}><WebIcon /></ViewBtn>
				<ViewBtn $w={21}><svg width="9" height="1" viewBox="0 0 9 1"><path d="M0 .5H9" stroke="#444" /></svg></ViewBtn>
				<Slider><Thumb /></Slider>
				<ViewBtn $w={16}><svg width="9" height="9" viewBox="0 0 9 9"><path d="M0 4.500H9M4.500 0V9" stroke="#444" /></svg></ViewBtn>
				<Zoom>100%</Zoom>
			</StatusBar>

			<Taskbar>
				<TaskItem $w={48}><WinLogo /></TaskItem>
				<SearchBar>
					<TaskSearchIcon />
					<SearchPrompt>Type here to search</SearchPrompt>
					<GiftsIcon />
				</SearchBar>
				<TaskItem $w={48}><TaskViewIcon /></TaskItem>
				<TaskItem $w={51}><EdgeIcon /></TaskItem>
				<TaskItem $w={48}><FolderIcon /></TaskItem>
				<TaskItem $w={51}><FirefoxIcon /></TaskItem>
				<TaskItem $w={48} $active><WordIcon /></TaskItem>
				<Tray>
					<TaskItem $w={24}><TrayCaret /></TaskItem>
					<TaskItem $w={24}><MeetIcon /></TaskItem>
					<TaskItem $w={24}><SpeakerIcon /></TaskItem>
					<TaskItem $w={24}><NetworkIcon /></TaskItem>
					<Clock><span>6:35 AM</span><span>2/24/2026</span></Clock>
					<TaskItem $w={44}><NotifyIcon /></TaskItem>
					<DesktopEdge />
				</Tray>
			</Taskbar>

			<Tooltip>
				<TipLine $ls={-0.32}>b2ba51b4491da8604ff9410d6e004971e3cd9a321390d0258</TipLine>
				<TipLine $ls={0.02}>e294ac42010b546.doc.rtf [Compatibility Mode] - Word</TipLine>
			</Tooltip>
			<Peek>
				<PeekHead><WordIcon s={18} />b2ba51b4491da8604ff9410d6e0...</PeekHead>
				<PeekShot />
			</Peek>
			<Watermark>ANY<PlayMark />RUN</Watermark>
		</Screen>
	)
}
